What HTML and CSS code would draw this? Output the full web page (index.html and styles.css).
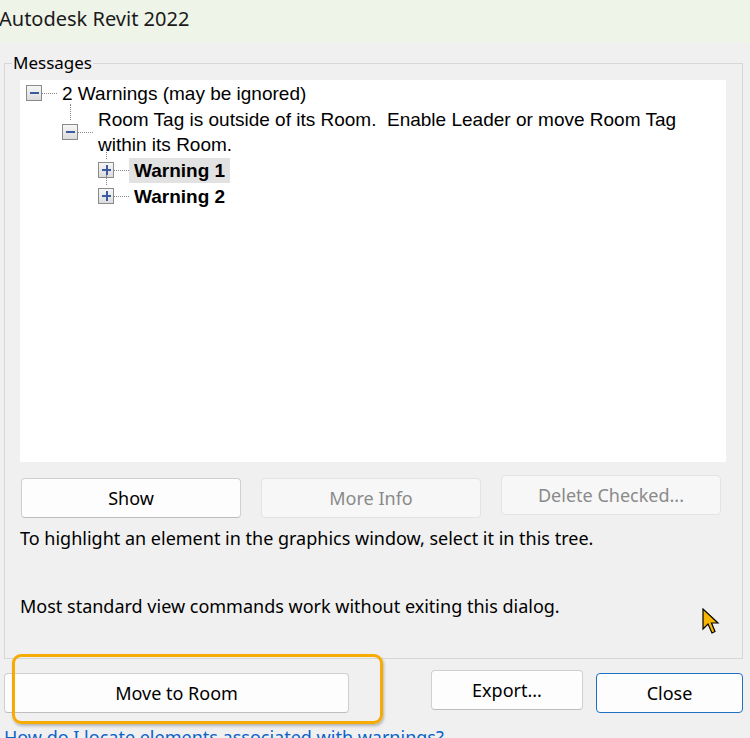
FILE: index.html
```html
<!DOCTYPE html>
<html lang="en">
<head>
    <meta charset="UTF-8">
    <title>Autodesk Revit 2022</title>
    <link rel="stylesheet" href="styles.css">
</head>
<body>
<div class="titlebar">Autodesk Revit 2022</div>

<div class="dialog">
    <fieldset class="group">
        <legend>Messages</legend>
        <div class="tree">
            <div class="node lvl1">
                <span class="box minus"></span><span class="dots"></span>
                <span class="label">2 Warnings (may be ignored)</span>
            </div>
            <div class="node lvl2">
                <span class="vline v1"></span>
                <span class="box minus"></span><span class="dots"></span>
                <span class="label">Room Tag is outside of its Room.&nbsp; Enable Leader or move Room Tag within its Room.</span>
            </div>
            <div class="node lvl3">
                <span class="vline v2"></span>
                <span class="box plus"></span><span class="dots"></span>
                <span class="label bold selected">Warning 1</span>
            </div>
            <div class="node lvl3">
                <span class="vline v3"></span>
                <span class="box plus"></span><span class="dots"></span>
                <span class="label bold">Warning 2</span>
            </div>
        </div>

        <div class="btn-row">
            <button class="btn">Show</button>
            <button class="btn disabled">More Info</button>
            <button class="btn disabled up">Delete Checked...</button>
        </div>

        <p class="hint">To highlight an element in the graphics window, select it in this tree.</p>
        <p class="hint second">Most standard view commands work without exiting this dialog.</p>

        <svg class="cursor" width="20" height="28" viewBox="0 0 20 28">
            <path d="M1 1 L1 21 L6 16 L10 25 L13 23.5 L9.5 15 L16 15 Z" fill="#f7b500" stroke="#000" stroke-width="1.2" stroke-linejoin="miter"/>
        </svg>
    </fieldset>

    <div class="bottom-row">
        <button class="btn move">Move to Room</button>
        <button class="btn export">Export...</button>
        <button class="btn close">Close</button>
        <div class="callout"></div>
    </div>

    <a class="help" href="#">How do I locate elements associated with warnings?</a>
</div>
</body>
</html>
```

FILE: styles.css
```css
body {
    margin: 0;
    background-color: #f0f0f0;
    font-family: "Noto Sans", "Open Sans", sans-serif;
    color: #000;
    overflow: hidden;
    height: 738px;
}
.titlebar {
    height: 43px;
    background-color: #eef4e8;
    font-size: 20px;
    line-height: 38px;
    margin-left: -1px;
    color: #1a1a1a;
}
.dialog {
    position: relative;
}
.group {
    margin: 9px 7px 0 4px;
    border: 1px solid #d7d7d7;
    padding: 0 16px 0 15px;
    height: 607px;
    box-sizing: border-box;
    position: relative;
}
.group legend {
    font-size: 17px;
    line-height: 22px;
    padding: 0 1px;
    margin-left: -8px;
}
.tree {
    margin-top: 6px;
    background-color: #fff;
    height: 382px;
    font-family: "Liberation Sans", Arial, sans-serif;
    font-size: 19px;
    padding-top: 2px;
    box-sizing: border-box;
}
.node {
    display: flex;
    align-items: center;
    position: relative;
}
.lvl1 {
    padding-left: 6px;
    height: 22px;
}
.lvl2 {
    padding-left: 42px;
    margin-top: 3px;
}
.lvl3 {
    padding-left: 78px;
    height: 26px;
}
.box {
    width: 14px;
    height: 14px;
    border: 1px solid #8a8a8a;
    background: linear-gradient(#f6f6f6, #dcdcdc);
    flex-shrink: 0;
    position: relative;
}
.box::before {
    content: '';
    position: absolute;
    left: 3px;
    top: 6px;
    width: 9px;
    height: 1.5px;
    background-color: #3b5aa0;
}
.plus::after {
    content: '';
    position: absolute;
    left: 7px;
    top: 2px;
    width: 1.5px;
    height: 10px;
    background-color: #3b5aa0;
}
.dots {
    width: 15px;
    border-top: 1px dotted #8a8a8a;
    margin-right: 5px;
    flex-shrink: 0;
}
.label {
    line-height: 25px;
}
.lvl2 .label {
    width: 600px;
}
.bold {
    font-weight: bold;
    padding: 0 5px 0 0;
}
.selected {
    background-color: #e2e2e2;
    padding-left: 5px;
    margin-left: -5px;
}
.vline {
    position: absolute;
    border-left: 1px dotted #8a8a8a;
}
.v1 {
    left: 50px;
    top: -3px;
    height: 16px;
}
.v2 {
    left: 86px;
    top: -8px;
    height: 10px;
}
.v3 {
    left: 86px;
    top: -8px;
    height: 10px;
}
.btn-row {
    display: flex;
    gap: 20px;
    margin-top: 16px;
    padding-left: 1px;
    align-items: flex-start;
}
.btn {
    font-family: "Noto Sans", "Open Sans", sans-serif;
    font-size: 18px;
    height: 40px;
    width: 220px;
    background-color: #fdfdfd;
    border: 1px solid #cfcfcf;
    border-bottom-color: #bdbdbd;
    border-radius: 4px;
    color: #000;
    padding: 0;
}
.btn.disabled {
    background-color: #f7f7f7;
    border-color: #e3e3e3;
    color: #8a8a8a;
}
.btn.up {
    margin-top: -3px;
}
.hint {
    font-size: 18px;
    margin: 7px 0 0 0;
    line-height: 26px;
}
.hint.second {
    margin-top: 42px;
}
.cursor {
    position: absolute;
    left: 697px;
    top: 534px;
}
.bottom-row {
    display: flex;
    align-items: flex-start;
    margin-top: 14px;
    padding-left: 4px;
    position: relative;
}
.btn.move {
    width: 345px;
    margin-top: 0;
}
.btn.export {
    width: 152px;
    margin-left: 82px;
    margin-top: -3px;
}
.btn.close {
    width: 147px;
    margin-left: 13px;
    border: 1px solid #1f6fc4;
    background-color: #fdfdfd;
}
.callout {
    position: absolute;
    left: 12px;
    top: -19px;
    width: 371px;
    height: 70px;
    box-sizing: border-box;
    border: 3px solid #f5ab00;
    border-radius: 9px;
    box-shadow: 1px 2px 3px rgba(0, 0, 0, 0.25);
}
.help {
    display: block;
    margin: 12px 0 0 4px;
    font-size: 18px;
    color: #0a63c8;
    text-decoration: none;
}
```
